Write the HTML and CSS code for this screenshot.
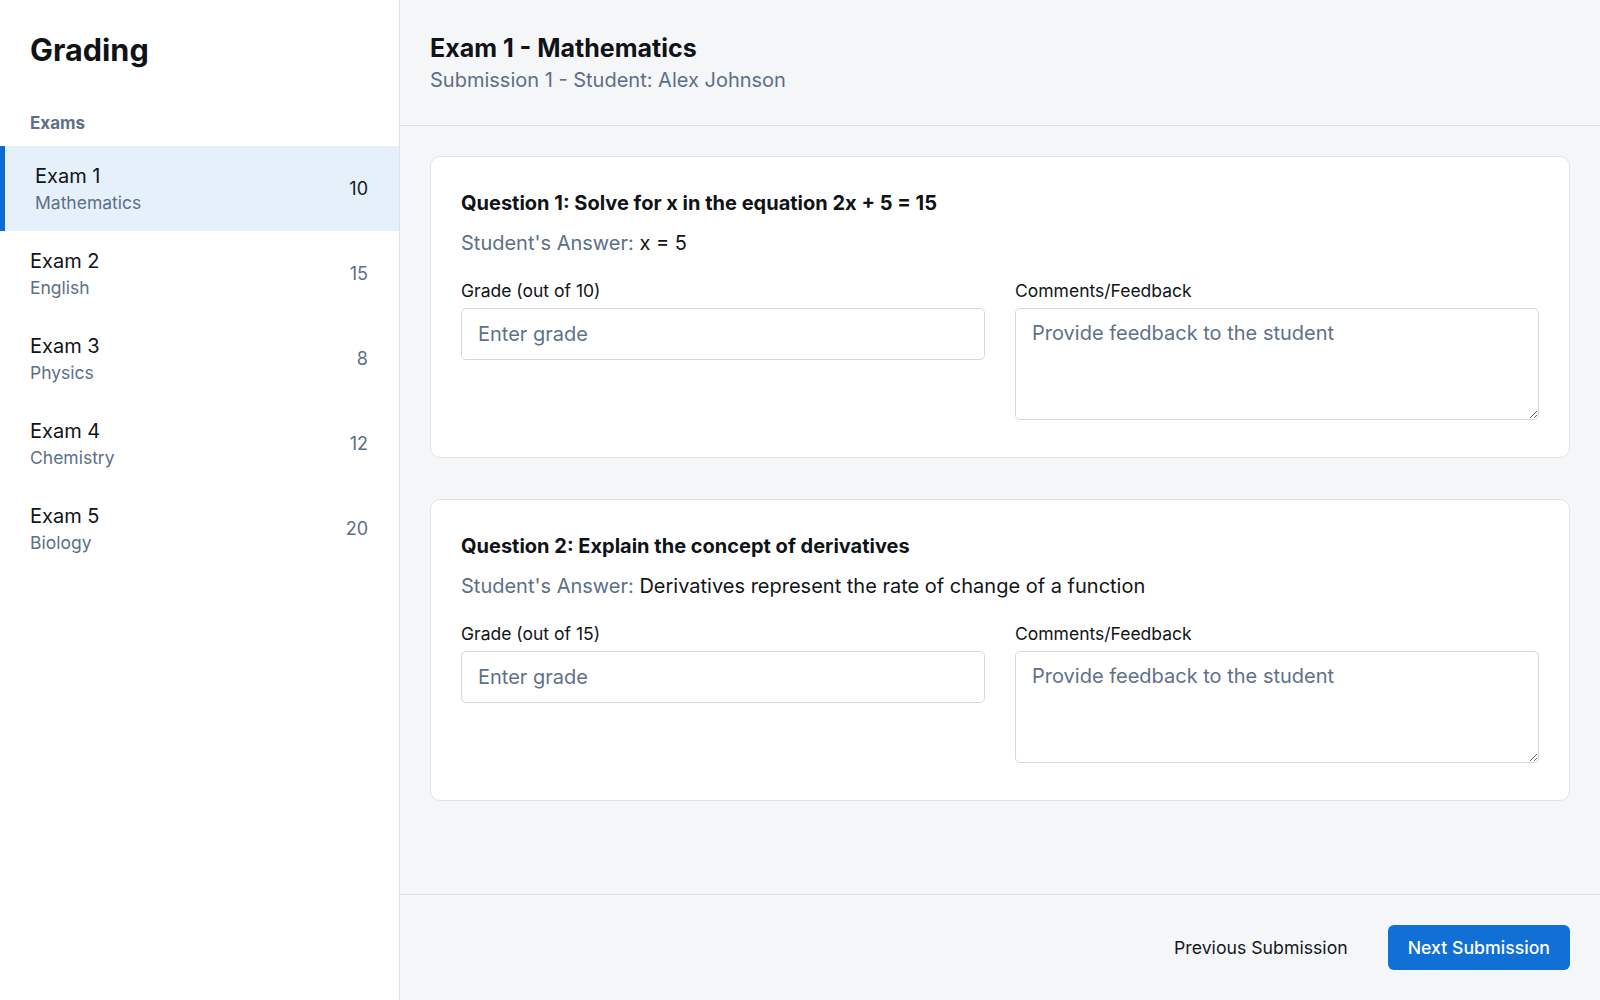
FILE: index.html
```html
<!DOCTYPE html>
<html lang="en">
<head>
<meta charset="utf-8">
<title>Grading</title>
<link rel="stylesheet" href="styles.css">
</head>
<body>
<div class="app">
  <aside class="sidebar">
    <h1 class="brand">Grading</h1>
    <div class="section-label">Exams</div>
    <ul class="exam-list">
      <li class="exam-item active">
        <div class="exam-info"><div class="exam-name">Exam 1</div><div class="exam-subject">Mathematics</div></div>
        <span class="exam-count">10</span>
      </li>
      <li class="exam-item">
        <div class="exam-info"><div class="exam-name">Exam 2</div><div class="exam-subject">English</div></div>
        <span class="exam-count">15</span>
      </li>
      <li class="exam-item">
        <div class="exam-info"><div class="exam-name">Exam 3</div><div class="exam-subject">Physics</div></div>
        <span class="exam-count">8</span>
      </li>
      <li class="exam-item">
        <div class="exam-info"><div class="exam-name">Exam 4</div><div class="exam-subject">Chemistry</div></div>
        <span class="exam-count">12</span>
      </li>
      <li class="exam-item">
        <div class="exam-info"><div class="exam-name">Exam 5</div><div class="exam-subject">Biology</div></div>
        <span class="exam-count">20</span>
      </li>
    </ul>
  </aside>
  <main class="main">
    <header class="main-header">
      <h2 class="exam-title">Exam 1 - Mathematics</h2>
      <div class="exam-meta">Submission 1 - Student: Alex Johnson</div>
    </header>
    <section class="content">
      <div class="card">
        <div class="question">Question 1: Solve for x in the equation 2x + 5 = 15</div>
        <div class="answer"><span class="answer-label">Student's Answer:</span> x = 5</div>
        <div class="fields">
          <div class="field">
            <label class="field-label">Grade (out of 10)</label>
            <input class="grade-input" type="text" placeholder="Enter grade">
          </div>
          <div class="field">
            <label class="field-label">Comments/Feedback</label>
            <textarea class="feedback" placeholder="Provide feedback to the student"></textarea>
          </div>
        </div>
      </div>
      <div class="card">
        <div class="question">Question 2: Explain the concept of derivatives</div>
        <div class="answer"><span class="answer-label">Student's Answer:</span> Derivatives represent the rate of change of a function</div>
        <div class="fields">
          <div class="field">
            <label class="field-label">Grade (out of 15)</label>
            <input class="grade-input" type="text" placeholder="Enter grade">
          </div>
          <div class="field">
            <label class="field-label">Comments/Feedback</label>
            <textarea class="feedback" placeholder="Provide feedback to the student"></textarea>
          </div>
        </div>
      </div>
    </section>
    <footer class="footer">
      <button class="btn btn-secondary">Previous Submission</button>
      <button class="btn btn-primary">Next Submission</button>
    </footer>
  </main>
</div>
</body>
</html>
```

FILE: styles.css
```css
* { box-sizing: border-box; }
html, body { margin: 0; height: 100%; }
body {
  font-family: Inter, "Noto Sans", sans-serif;
  color: #111418;
  background: #f5f6f8;
}
.app {
  display: flex;
  height: 1000px;
}
.sidebar {
  width: 400px;
  flex: 0 0 400px;
  background: #ffffff;
  border-right: 1px solid #dde1e6;
  padding-top: 30px;
}
.brand {
  margin: 0 0 44px;
  padding: 0 30px;
  font-size: 30.6px;
  font-weight: 700;
  line-height: 39px;
  color: #0f1216;
}
.section-label {
  padding: 0 30px;
  font-size: 17px;
  line-height: 20px;
  font-weight: 700;
  color: #5e6f87;
  margin-bottom: 13px;
}
.exam-list {
  list-style: none;
  margin: 0;
  padding: 0;
}
.exam-item {
  display: flex;
  align-items: center;
  justify-content: space-between;
  height: 85px;
  padding: 0 31px 0 30px;
}
.exam-item.active {
  background: #e6f0fa;
  border-left: 5px solid #0b6bd3;
}
.exam-info {
  display: flex;
  flex-direction: column;
  gap: 4px;
}
.exam-name {
  font-size: 20px;
  color: #111418;
}
.exam-subject {
  font-size: 17.5px;
  color: #5c6f88;
}
.exam-count {
  font-size: 18px;
  color: #5c6f88;
}
.exam-item.active .exam-count { color: #15181c; }

.main {
  flex: 1;
  display: flex;
  flex-direction: column;
  min-width: 0;
}
.main-header {
  height: 126px;
  flex: 0 0 126px;
  padding: 33px 30px 0;
  border-bottom: 1px solid #dadfe5;
}
.exam-title {
  margin: 0 0 5px;
  font-size: 25px;
  font-weight: 700;
  line-height: 30px;
  color: #0f1216;
}
.exam-meta {
  font-size: 20px;
  color: #5c6f88;
}
.content {
  flex: 1;
  padding: 30px;
  display: flex;
  flex-direction: column;
  gap: 41px;
  overflow: auto;
}
.card {
  background: #ffffff;
  border: 1px solid #dfe3e8;
  border-radius: 10px;
  padding: 31px 30px 37px;
}
.question {
  font-size: 20px;
  font-weight: 700;
  line-height: 30px;
  color: #0f1216;
  margin-bottom: 10px;
}
.answer {
  font-size: 20px;
  line-height: 30px;
  color: #111418;
  margin-bottom: 19px;
}
.answer-label { color: #5c6f88; }
.fields {
  display: grid;
  grid-template-columns: 1fr 1fr;
  gap: 30px;
  align-items: start;
}
.field {
  display: flex;
  flex-direction: column;
}
.field-label {
  font-size: 17.5px;
  line-height: 27px;
  margin-bottom: 4px;
  color: #111418;
}
.grade-input, .feedback {
  font-family: Inter, "Noto Sans", sans-serif;
  font-size: 20px;
  color: #111418;
  background: #ffffff;
  border: 1px solid #d3d9e0;
  border-radius: 5px;
  outline: none;
}
.grade-input {
  height: 52px;
  padding: 0 16px;
}
.feedback {
  display: block;
  height: 112px;
  padding: 12px 16px;
  resize: vertical;
}
.grade-input::placeholder, .feedback::placeholder {
  color: #5f7189;
  opacity: 1;
}
.footer {
  flex: 0 0 106px;
  height: 106px;
  border-top: 1px solid #dadfe5;
  padding: 30px;
  display: flex;
  justify-content: flex-end;
  align-items: center;
  gap: 20px;
}
.btn {
  font-family: Inter, "Noto Sans", sans-serif;
  font-size: 17.7px;
  font-weight: 500;
  height: 45px;
  padding: 0 20px;
  border-radius: 6px;
  border: none;
  cursor: pointer;
}
.btn-secondary {
  background: transparent;
  color: #15181c;
  font-weight: 400;
}
.btn-primary {
  background: #1070d6;
  color: #ffffff;
}
```
